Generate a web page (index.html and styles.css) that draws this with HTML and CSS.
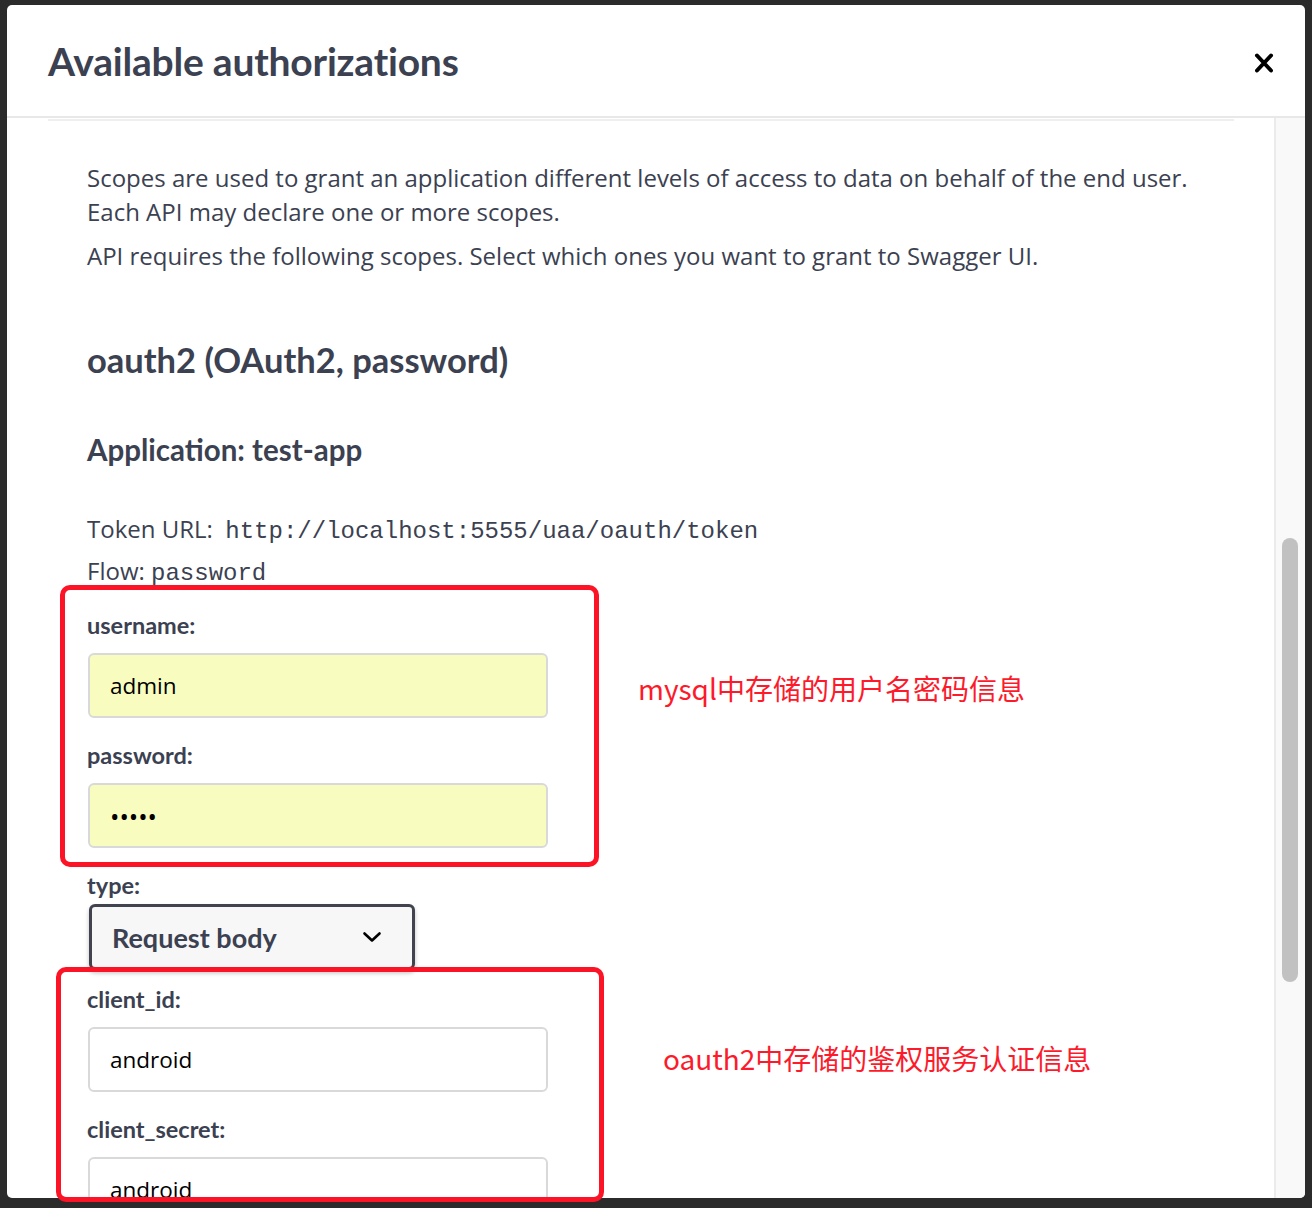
FILE: index.html
```html
<!DOCTYPE html>
<html lang="en">
<head>
<meta charset="utf-8">
<title>Available authorizations</title>
<link rel="stylesheet" href="styles.css">
</head>
<body>
<div class="modal">
  <div class="modal-header">
    <h3 class="modal-title">Available authorizations</h3>
    <button class="close" aria-label="Close">
      <svg width="20" height="22" viewBox="0 0 20 22"><path d="M3 3.5 L17 18.5 M17 3.5 L3 18.5" stroke="#000" stroke-width="4" stroke-linecap="round" fill="none"/></svg>
    </button>
  </div>
  <div class="modal-body">
    <div class="content">
      <div class="divider"></div>
      <div class="auth">
        <p class="desc">Scopes are used to grant an application different levels of access to data on behalf of the end user. Each API may declare one or more scopes.</p>
        <p class="desc second">API requires the following scopes. Select which ones you want to grant to Swagger UI.</p>
        <h4 class="scheme">oauth2 (OAuth2, password)</h4>
        <h5 class="app">Application: test-app</h5>
        <p class="meta token">Token URL:&nbsp; <code>http://localhost:5555/uaa/oauth/token</code></p>
        <p class="meta flow">Flow: <code>password</code></p>
        <label class="lbl first">username:</label>
        <input class="field filled" type="text" value="admin">
        <label class="lbl">password:</label>
        <input class="field filled secret" type="password" value="admin">
        <label class="lbl">type:</label>
        <div class="select">
          <span>Request body</span>
          <svg width="20" height="14" viewBox="0 0 20 14"><path d="M2.5 3.5 L10 10.5 L17.5 3.5" stroke="#000" stroke-width="2.6" fill="none" stroke-linecap="round" stroke-linejoin="round"/></svg>
        </div>
        <label class="lbl after-select">client_id:</label>
        <input class="field" type="text" value="android">
        <label class="lbl">client_secret:</label>
        <input class="field" type="text" value="android">
      </div>
    </div>
    <div class="track"><div class="thumb"></div></div>
  </div>
</div>
<div class="mark mark-user"></div>
<div class="mark mark-client"></div>
<div class="note note-user">mysql中存储的用户名密码信息</div>
<div class="note note-client">oauth2中存储的鉴权服务认证信息</div>
</body>
</html>
```
FILE: styles.css
```css
html, body {
  margin: 0;
  padding: 0;
}
body {
  background: #2b2b2b;
  width: 1312px;
  height: 1208px;
  overflow: hidden;
  position: relative;
  font-family: "Open Sans", "Noto Sans", sans-serif;
  color: #3b4151;
}
.modal {
  margin: 5px 0 0 7px;
  width: 1298px;
  height: 1193px;
  background: #fff;
  border-radius: 5px;
  overflow: hidden;
  display: flex;
  flex-direction: column;
}
.modal-header {
  height: 111px;
  flex: none;
  border-bottom: 2px solid #e8e8e8;
  display: flex;
  align-items: center;
  justify-content: space-between;
  padding: 0 31px 0 41px;
}
.modal-title {
  margin: 0;
  font-family: Lato, "Noto Sans", sans-serif;
  font-weight: 700;
  font-size: 39px;
  color: #3b4151;
  letter-spacing: -0.2px;
}
.close {
  border: 0;
  background: none;
  padding: 0;
  width: 20px;
  height: 22px;
  margin-top: 4px;
  display: block;
}
.close svg { display: block; }
.modal-body {
  flex: 1;
  display: flex;
  min-height: 0;
}
.content {
  flex: 1;
  padding: 0 40px 0 41px;
  overflow: hidden;
}
.divider {
  margin-top: 1px;
  height: 2px;
  background: #efefef;
}
.auth {
  padding-left: 39px;
}
.desc {
  margin: 40px 0 0;
  font-size: 24px;
  line-height: 34px;
}
.desc.second {
  margin-top: 10px;
}
.scheme {
  margin: 65px 0 0;
  font-family: Lato, "Noto Sans", sans-serif;
  font-weight: 700;
  font-size: 34.5px;
  line-height: 44px;
}
.app {
  margin: 51px 0 0;
  font-family: Lato, "Noto Sans", sans-serif;
  font-weight: 700;
  font-size: 29.5px;
  line-height: 34px;
}
.meta {
  margin: 45px 0 0;
  font-size: 24px;
  line-height: 34px;
  white-space: nowrap;
}
.meta.flow {
  margin-top: 5px;
}
.meta code {
  font-family: "Liberation Mono", "DejaVu Sans Mono", monospace;
  font-size: 24px;
}
.lbl {
  display: block;
  margin-top: 22px;
  font-family: Lato, "Noto Sans", sans-serif;
  font-weight: 700;
  font-size: 23.5px;
  line-height: 30px;
}
.lbl.first {
  margin-top: 19px;
}
.lbl.after-select {
  margin-top: 14px;
}
.field {
  display: block;
  box-sizing: border-box;
  margin: 13px 0 0 1px;
  width: 460px;
  height: 65px;
  padding: 0 20px;
  border: 2px solid #d9d9d9;
  border-radius: 6px;
  background: #fff;
  font-family: "Open Sans", "Noto Sans", sans-serif;
  font-size: 22.5px;
  color: #000;
  outline: none;
}
.field.filled {
  background: #f9fcbf;
}
.field.secret {
  font-family: "Open Sans", sans-serif;
  font-size: 25px;
  letter-spacing: 0;
}
.select {
  box-sizing: border-box;
  margin: 4px 0 0 2px;
  width: 326px;
  height: 66px;
  border: 3px solid #41444e;
  border-radius: 6px;
  background: #f7f7f7;
  box-shadow: 0 3px 4px rgba(0, 0, 0, 0.25);
  display: flex;
  align-items: center;
  justify-content: space-between;
  padding: 0 30px 0 20px;
  font-family: Lato, "Noto Sans", sans-serif;
  font-weight: 700;
  font-size: 27px;
  color: #3b4151;
}
.select svg { display: block; }
.track {
  flex: none;
  width: 29px;
  border-left: 2px solid #ebebeb;
  background: #f9f9f9;
}
.thumb {
  margin: 420px 0 0 6px;
  width: 16px;
  height: 444px;
  border-radius: 8px;
  background: #c1c1c1;
}
.mark {
  position: absolute;
  box-sizing: border-box;
  border: 5px solid #fc1426;
  border-radius: 10px;
}
.mark-user {
  left: 60px;
  top: 585px;
  width: 539px;
  height: 282px;
}
.mark-client {
  left: 56px;
  top: 967px;
  width: 548px;
  height: 235px;
}
.note {
  position: absolute;
  font-family: "Noto Sans CJK SC", "Noto Sans", sans-serif;
  font-size: 28px;
  line-height: 34px;
  color: #fc1a2b;
  white-space: nowrap;
}
.note-user {
  left: 638px;
  top: 671px;
}
.note-client {
  left: 663px;
  top: 1041px;
}
```
